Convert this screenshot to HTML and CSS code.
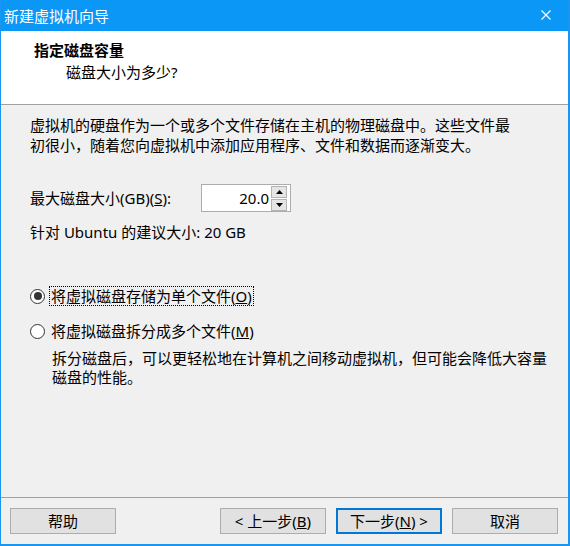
FILE: index.html
```html
<!DOCTYPE html>
<html lang="zh-CN">
<head>
<meta charset="utf-8">
<title>新建虚拟机向导</title>
<link rel="stylesheet" href="styles.css">
</head>
<body>
<div class="window">
  <div class="titlebar">
    <span class="title">新建虚拟机向导</span>
    <span class="close">
      <svg width="12" height="12" viewBox="0 0 12 12"><path d="M1.5 1.5 L10.5 10.5 M10.5 1.5 L1.5 10.5" stroke="#fff" stroke-width="1.2" fill="none"/></svg>
    </span>
  </div>
  <div class="header">
    <div class="h-title">指定磁盘容量</div>
    <div class="h-sub">磁盘大小为多少?</div>
  </div>
  <div class="content">
    <p class="para">虚拟机的硬盘作为一个或多个文件存储在主机的物理磁盘中。这些文件最初很小，随着您向虚拟机中添加应用程序、文件和数据而逐渐变大。</p>
    <div class="size-row">
      <span class="size-label">最大磁盘大小(GB)(<u>S</u>):</span>
      <div class="spinbox">
        <span class="spin-value">20.0</span>
        <div class="spin-btns">
          <span class="spin-btn"><svg width="7" height="4" viewBox="0 0 7 4"><path d="M3.5 0 L7 4 L0 4 Z" fill="#000"/></svg></span>
          <span class="spin-btn"><svg width="7" height="4" viewBox="0 0 7 4"><path d="M0 0 L7 0 L3.5 4 Z" fill="#000"/></svg></span>
        </div>
      </div>
    </div>
    <div class="recommend">针对 Ubuntu 的建议大小: 20 GB</div>
    <div class="radio-row first">
      <span class="radio checked"></span>
      <span class="radio-label focus">将虚拟磁盘存储为单个文件(<u>O</u>)</span>
    </div>
    <div class="radio-row second">
      <span class="radio"></span>
      <span class="radio-label">将虚拟磁盘拆分成多个文件(<u>M</u>)</span>
    </div>
    <p class="desc">拆分磁盘后，可以更轻松地在计算机之间移动虚拟机，但可能会降低大容量磁盘的性能。</p>
  </div>
  <div class="footer">
    <button class="btn">帮助</button>
    <div class="spacer"></div>
    <button class="btn">&lt; 上一步(<u>B</u>)</button>
    <button class="btn default">下一步(<u>N</u>) &gt;</button>
    <button class="btn">取消</button>
  </div>
</div>
</body>
</html>
```
FILE: styles.css
```css
* { box-sizing: border-box; }
html, body { margin: 0; padding: 0; }
body {
  width: 570px;
  height: 546px;
  font-family: "Noto Sans", "Noto Sans CJK SC", sans-serif;
  font-size: 15px;
  color: #000;
  background: #f0f0f0;
  overflow: hidden;
}
.window {
  width: 570px;
  height: 546px;
  display: flex;
  flex-direction: column;
  border-left: 1px solid #1a96f0;
  border-right: 2px solid #1a96f0;
  border-bottom: 2px solid #1a96f0;
  background: #f0f0f0;
}
.titlebar {
  height: 31px;
  flex: none;
  background: #0a97f5;
  color: #fff;
  display: flex;
  align-items: center;
  padding-left: 3px;
  padding-right: 16px;
}
.title { flex: 1; line-height: 20px; }
.close { display: flex; width: 12px; height: 12px; margin-top: -1px; }
.header {
  height: 74px;
  flex: none;
  background: #fff;
  border-bottom: 1px solid #a0a0a0;
  padding: 9px 0 0 33px;
}
.h-title { font-weight: bold; line-height: 20px; }
.h-sub { line-height: 20px; margin-top: 2px; margin-left: 32px; }
.content {
  flex: 1;
  padding: 10px 0 0 29px;
}
.para {
  margin: 0;
  width: 490px;
  line-height: 20px;
}
.size-row {
  margin-top: 29px;
  display: flex;
  align-items: center;
  height: 28px;
}
.size-label { width: 171px; line-height: 20px; }
.spinbox {
  width: 90px;
  height: 28px;
  border: 1px solid #acacac;
  background: #fff;
  display: flex;
  align-items: center;
  padding-right: 3px;
}
.spin-value {
  flex: 1;
  text-align: right;
  padding-right: 2px;
  line-height: 20px;
}
.spin-btns {
  display: flex;
  flex-direction: column;
  width: 16px;
  gap: 1px;
}
.spin-btn {
  height: 12px;
  background: #e5e5e5;
  border: 1px solid #b4b4b4;
  display: flex;
  align-items: center;
  justify-content: center;
}
.recommend { margin-top: 10px; line-height: 20px; }
.radio-row {
  display: flex;
  align-items: center;
  height: 20px;
}
.radio-row.first { margin-top: 44px; }
.radio-row.second { margin-top: 15px; }
.radio {
  width: 15px;
  height: 15px;
  border: 1px solid #333;
  border-radius: 50%;
  background: #fff;
  margin-right: 4px;
  display: flex;
  align-items: center;
  justify-content: center;
}
.radio.checked::after {
  content: "";
  width: 8px;
  height: 8px;
  border-radius: 50%;
  background: #333;
}
.radio-label {
  line-height: 18px;
  padding: 0 1px;
  border: 1px solid transparent;
}
.radio-label.focus { border: 1px dotted #000; }
.desc {
  margin: 8px 0 0 22px;
  width: 500px;
  line-height: 19px;
}
.footer {
  flex: none;
  border-top: 1px solid #a0a0a0;
  padding: 10px 9px 10px 9px;
  display: flex;
  gap: 10px;
}
.spacer { width: 84px; }
.btn {
  width: 106px;
  height: 26px;
  background: #e1e1e1;
  border: 1px solid #adadad;
  font-family: inherit;
  font-size: 15px;
  color: #000;
  padding: 0;
  line-height: 20px;
}
.btn.default { border: 2px solid #0078d7; }
```
